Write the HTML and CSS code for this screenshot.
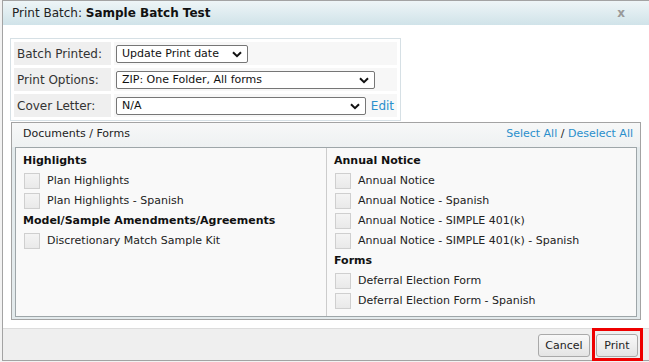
FILE: index.html
```html
<!doctype html>
<html>
<head>
	<meta charset="utf-8">
	<title>Print Batch</title>
	<link rel="stylesheet" href="styles.css">
</head>
<body>
	<div class="dialog">
		<div class="dialog-title">
			Print Batch: <b>Sample Batch Test</b>
			<span class="close">x</span>
		</div>
		<div class="dialog-body">
			<table class="options">
				<tr>
					<td class="lbl">Batch Printed:</td>
					<td class="val">
						<span class="sel sel-short">
							<select><option>Update Print date</option></select>
							<svg class="chev" width="10" height="7" viewBox="0 0 10 7"><path d="M1 1.2 L5 5.2 L9 1.2" fill="none" stroke="#111" stroke-width="2"/></svg>
						</span>
					</td>
				</tr>
				<tr>
					<td class="lbl">Print Options:</td>
					<td class="val">
						<span class="sel sel-long">
							<select><option>ZIP: One Folder, All forms</option></select>
							<svg class="chev" width="10" height="7" viewBox="0 0 10 7"><path d="M1 1.2 L5 5.2 L9 1.2" fill="none" stroke="#111" stroke-width="2"/></svg>
						</span>
					</td>
				</tr>
				<tr>
					<td class="lbl">Cover Letter:</td>
					<td class="val">
						<span class="sel sel-mid">
							<select><option>N/A</option></select>
							<svg class="chev" width="10" height="7" viewBox="0 0 10 7"><path d="M1 1.2 L5 5.2 L9 1.2" fill="none" stroke="#111" stroke-width="2"/></svg>
						</span>
						<a href="#" class="link edit">Edit</a>
					</td>
				</tr>
			</table>

			<div class="docs">
				<div class="docs-head">
					<span>Documents / Forms</span>
					<span class="links"><a href="#" class="link">Select All</a> / <a href="#" class="link">Deselect All</a></span>
				</div>
				<div class="docs-list">
					<div class="col">
						<div class="grp">Highlights</div>
						<label class="item"><input type="checkbox">Plan Highlights</label>
						<label class="item"><input type="checkbox">Plan Highlights - Spanish</label>
						<div class="grp">Model/Sample Amendments/Agreements</div>
						<label class="item"><input type="checkbox">Discretionary Match Sample Kit</label>
					</div>
					<div class="col col-right">
						<div class="grp">Annual Notice</div>
						<label class="item"><input type="checkbox">Annual Notice</label>
						<label class="item"><input type="checkbox">Annual Notice - Spanish</label>
						<label class="item"><input type="checkbox">Annual Notice - SIMPLE 401(k)</label>
						<label class="item"><input type="checkbox">Annual Notice - SIMPLE 401(k) - Spanish</label>
						<div class="grp">Forms</div>
						<label class="item"><input type="checkbox">Deferral Election Form</label>
						<label class="item"><input type="checkbox">Deferral Election Form - Spanish</label>
					</div>
				</div>
			</div>
		</div>
		<div class="dialog-foot">
			<button class="btn btn-cancel">Cancel</button>
			<span class="mark"><button class="btn btn-print">Print</button></span>
		</div>
	</div>
</body>
</html>
```

FILE: styles.css
```css
html, body {
	margin: 0;
	overflow: hidden;
}
body {
	background: #f2f2f2;
	font-family: "DejaVu Sans", Tahoma, sans-serif;
	font-size: 11px;
	color: #222;
}
.dialog {
	width: 650px;
	height: 359px;
	margin-left: 2px;
	border: 1px solid #a3a3a3;
	background: #fff;
	display: flex;
	flex-direction: column;
}
.dialog-title {
	height: 24px;
	line-height: 24px;
	padding-left: 9px;
	font-size: 12px;
	color: #222;
	background: linear-gradient(to bottom, #eef5f7 0, #d0e3e9 100%);
	position: relative;
	flex: none;
}
.dialog-title b {
	color: #111;
}
.close {
	position: absolute;
	right: 28px;
	top: 0;
	font-weight: bold;
	color: #999;
	font-size: 12px;
}
.dialog-body {
	flex: 1;
	padding: 13px 12px 0 7px;
	overflow: hidden;
}
.options {
	border: 1px solid #d6e0e5;
	border-spacing: 3px;
	padding: 0;
}
.options td {
	height: 23px;
	padding: 0;
	font-size: 12px;
	white-space: nowrap;
}
.lbl {
	width: 94px;
	padding-left: 3px !important;
	background: #efefef;
	color: #333;
}
.val {
	width: 283px;
	background: #f7f7f7;
}
.sel {
	display: inline-block;
	position: relative;
	vertical-align: middle;
}
.sel select {
	-webkit-appearance: none;
	appearance: none;
	height: 18px;
	border: 1px solid #767676;
	border-radius: 2px;
	background: #fff;
	font-family: inherit;
	font-size: 11px;
	color: #111;
	padding: 0 0 0 5px;
	margin: 0 0 0 2px;
	display: block;
}
.sel-short select { width: 132px; }
.sel-long select { width: 259px; }
.sel-mid select { width: 250px; }
.chev {
	position: absolute;
	right: 6px;
	top: 6px;
}
.link {
	color: #2a8fcc;
	text-decoration: none;
}
.edit {
	font-size: 12px;
	margin-left: 1px;
	vertical-align: middle;
}
.docs {
	margin-top: 1px;
	margin-left: 1px;
	border: 1px solid #a3a3a3;
	background: #e3eaec;
	padding: 0 3px 2px 3px;
}
.docs-head {
	height: 24px;
	line-height: 22px;
	margin: 0 -3px;
	padding: 0 7px 0 11px;
	background: linear-gradient(to bottom, #f7f8f8 0, #eef1f2 100%);
	display: flex;
	justify-content: space-between;
	font-size: 11px;
}
.docs-list {
	border: 1px solid #9ea6a9;
	background: #f9f9f9;
	height: 168px;
	display: flex;
}
.col {
	box-sizing: border-box;
	flex: 0 0 310px;
	padding: 3px 0 0 7px;
}
.col-right {
	flex: 1;
	border-left: 1px solid #ccc;
}
.grp {
	font-weight: bold;
	font-size: 11px;
	height: 20px;
	line-height: 20px;
	color: #111;
}
.item {
	display: block;
	height: 20px;
	line-height: 20px;
	font-size: 11px;
	color: #222;
}
.item input {
	-webkit-appearance: none;
	appearance: none;
	width: 16px;
	height: 16px;
	margin: 0 7px 0 1px;
	vertical-align: -5px;
	border: 1px solid #cfcfcf;
	background: linear-gradient(to bottom, #f4f4f4, #e9e9e9);
}
.dialog-foot {
	height: 31px;
	flex: none;
	border-top: 1px solid #dcdcdc;
	background: #efefef;
	display: flex;
	justify-content: flex-end;
	align-items: flex-start;
	padding-right: 10px;
}
.btn {
	font-family: inherit;
	font-size: 11px;
	color: #222;
	height: 23px;
	padding: 0;
	border: 1px solid #a9a9a9;
	border-radius: 3px;
	background: linear-gradient(to bottom, #f8f8f8, #e4e4e4);
	margin-top: 5px;
}
.btn-cancel {
	width: 52px;
}
.btn-print {
	width: 42px;
}
.mark {
	border: 3px solid #ee0000;
	padding: 3px 2px 1px 1px;
	margin-left: 2px;
	margin-top: -1px;
}
.mark .btn {
	margin-top: 0;
}
```
